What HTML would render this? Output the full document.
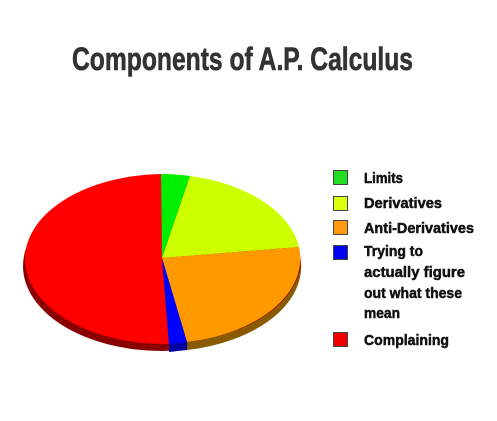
<!DOCTYPE html>
<html><head><style>html,body{margin:0;padding:0;background:#fff;width:497px;height:421px;overflow:hidden}</style></head>
<body>
<svg width="497" height="421" viewBox="0 0 497 421" xmlns="http://www.w3.org/2000/svg">
<rect width="497" height="421" fill="#fff"/>
<text x="72" y="70" font-family="Liberation Sans, sans-serif" font-weight="bold" font-size="32" fill="#333" stroke="#333" stroke-width="0.6" textLength="341" lengthAdjust="spacingAndGlyphs">Components of A.P. Calculus</text>
<!-- side -->
<ellipse cx="162" cy="266" rx="139" ry="85" fill="#8a0000"/>
<path d="M187 350 A140 85 0 0 0 301 262 L301 254 A140 85 0 0 1 187 342 Z" fill="#8a5a00"/>
<path d="M169 352 L187 350 L187 342 L169 344 Z" fill="#0000a0"/>
<!-- top -->
<path d="M162 258 L161 174 A140 85 0 0 0 169 344 Z" fill="#ff0000"/>
<path d="M162 258 L161 174 A140 85 0 0 1 190 176 Z" fill="#00ee00"/>
<path d="M162 258 L190 176 A140 85 0 0 1 299 247 Z" fill="#ccff00"/>
<path d="M162 258 L299 247 A140 85 0 0 1 187 342 Z" fill="#ff9900"/>
<path d="M162 258 L187 342 A140 85 0 0 1 169 344 Z" fill="#0000ff"/>
<!-- legend -->
<g stroke="#444" stroke-width="1">
<rect x="333.5" y="170.5" width="14" height="14" fill="#22dd22"/>
<rect x="333.5" y="196.5" width="14" height="14" fill="#ddff11"/>
<rect x="333.5" y="220.5" width="14" height="14" fill="#ff9911"/>
<rect x="333.5" y="245.5" width="14" height="14" fill="#0000ee"/>
<rect x="333.5" y="332.5" width="14" height="14" fill="#ee0000"/>
</g>
<g font-family="Liberation Sans, sans-serif" font-weight="bold" font-size="15" fill="#111" stroke="#111" stroke-width="0.5">
<text x="364" y="183" textLength="39" lengthAdjust="spacingAndGlyphs">Limits</text>
<text x="364" y="208" textLength="78" lengthAdjust="spacingAndGlyphs">Derivatives</text>
<text x="364" y="233" textLength="110" lengthAdjust="spacingAndGlyphs">Anti-Derivatives</text>
<text x="364" y="256" textLength="59" lengthAdjust="spacingAndGlyphs">Trying to</text>
<text x="364" y="277" textLength="101" lengthAdjust="spacingAndGlyphs">actually figure</text>
<text x="364" y="298" textLength="98" lengthAdjust="spacingAndGlyphs">out what these</text>
<text x="364" y="318" textLength="36" lengthAdjust="spacingAndGlyphs">mean</text>
<text x="364" y="345" textLength="85" lengthAdjust="spacingAndGlyphs">Complaining</text>
</g>
</svg>
</body></html>
